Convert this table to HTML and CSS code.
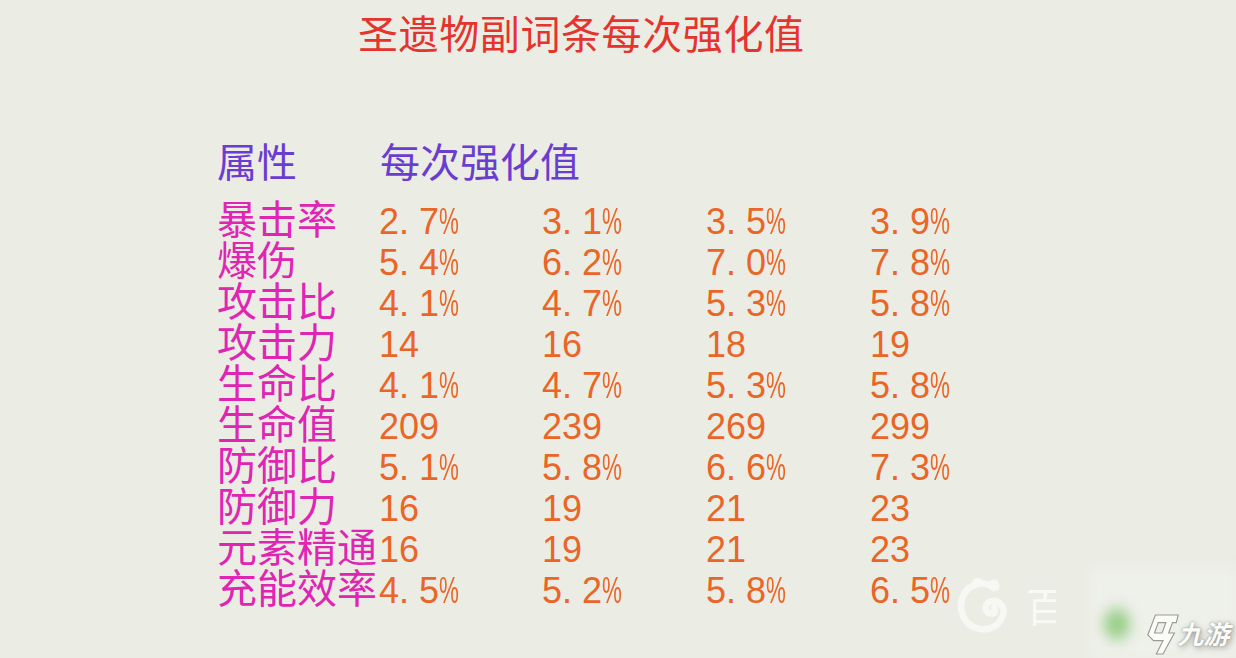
FILE: index.html
```html
<!DOCTYPE html>
<html lang="zh-CN">
<head>
<meta charset="utf-8">
<title>圣遗物副词条每次强化值</title>
<link rel="stylesheet" href="styles.css">
</head>
<body>
<div class="page">
  <h1 class="title">圣遗物副词条每次强化值</h1>
  <div class="table">
    <div class="row head"><span>属性</span><span class="span4">每次强化值</span></div>
    <div class="rows">
      <div class="row"><span class="lab">暴击率</span><span class="val">2. 7<i class="pct">%</i></span><span class="val">3. 1<i class="pct">%</i></span><span class="val">3. 5<i class="pct">%</i></span><span class="val">3. 9<i class="pct">%</i></span></div>
      <div class="row"><span class="lab">爆伤</span><span class="val">5. 4<i class="pct">%</i></span><span class="val">6. 2<i class="pct">%</i></span><span class="val">7. 0<i class="pct">%</i></span><span class="val">7. 8<i class="pct">%</i></span></div>
      <div class="row"><span class="lab">攻击比</span><span class="val">4. 1<i class="pct">%</i></span><span class="val">4. 7<i class="pct">%</i></span><span class="val">5. 3<i class="pct">%</i></span><span class="val">5. 8<i class="pct">%</i></span></div>
      <div class="row"><span class="lab">攻击力</span><span class="val">14</span><span class="val">16</span><span class="val">18</span><span class="val">19</span></div>
      <div class="row"><span class="lab">生命比</span><span class="val">4. 1<i class="pct">%</i></span><span class="val">4. 7<i class="pct">%</i></span><span class="val">5. 3<i class="pct">%</i></span><span class="val">5. 8<i class="pct">%</i></span></div>
      <div class="row"><span class="lab">生命值</span><span class="val">209</span><span class="val">239</span><span class="val">269</span><span class="val">299</span></div>
      <div class="row"><span class="lab">防御比</span><span class="val">5. 1<i class="pct">%</i></span><span class="val">5. 8<i class="pct">%</i></span><span class="val">6. 6<i class="pct">%</i></span><span class="val">7. 3<i class="pct">%</i></span></div>
      <div class="row"><span class="lab">防御力</span><span class="val">16</span><span class="val">19</span><span class="val">21</span><span class="val">23</span></div>
      <div class="row"><span class="lab">元素精通</span><span class="val">16</span><span class="val">19</span><span class="val">21</span><span class="val">23</span></div>
      <div class="row"><span class="lab">充能效率</span><span class="val">4. 5<i class="pct">%</i></span><span class="val">5. 2<i class="pct">%</i></span><span class="val">5. 8<i class="pct">%</i></span><span class="val">6. 5<i class="pct">%</i></span></div>
    </div>
  </div>

  <div class="wm-baidu">
    <svg class="wm-baidu-logo" width="60" height="60" viewBox="0 0 64 64">
      <path d="M44 14 C36 6 20 8 13 20 C6 32 10 50 24 56 C36 61 50 56 54 44 C58 34 50 26 42 28 C34 30 34 40 41 41 C45 42 47 38 45 35" fill="none" stroke="#f8f8f4" stroke-width="7" stroke-linecap="round" opacity="0.95"/>
      <path d="M24 12 C22 5 30 3 32 9" fill="none" stroke="#f8f8f4" stroke-width="5" stroke-linecap="round" opacity="0.95"/>
      <path d="M40 12 C42 5 50 6 48 14" fill="none" stroke="#f8f8f4" stroke-width="5" stroke-linecap="round" opacity="0.95"/>
    </svg>
    <span class="wm-baidu-text">百</span>
  </div>

  <div class="wm-jy">
    <div class="wm-jy-glow"></div>
    <div class="wm-jy-green"></div>
    <svg class="wm-jy-logo" width="38" height="44" viewBox="0 0 40 46">
      <path d="M12 3 L36 3 L34 11 L30 11 L26 22 L32 22 L20 44 L13 44 L20 30 L10 30 L4 24 Z M15 11 L11 22 L19 22 L23 11 Z" fill="#fbfbf8" fill-rule="evenodd" stroke="#9a9a96" stroke-width="1.2"/>
    </svg>
    <span class="wm-jy-text">九游</span>
  </div>
</div>
</body>
</html>
```

FILE: styles.css
```css
html, body {
  margin: 0;
  padding: 0;
}
body {
  background: #ebede4;
  width: 1236px;
  height: 658px;
  overflow: hidden;
}
.page {
  position: relative;
  width: 1236px;
  height: 658px;
  padding-top: 12px;
  box-sizing: border-box;
}
.title {
  margin: 0;
  padding-left: 358px;
  font-family: "Noto Sans CJK SC", sans-serif;
  font-weight: 400;
  font-size: 40px;
  line-height: 41px;
  letter-spacing: 0.6px;
  color: #e5332e;
}
.table {
  margin-top: 87px;
  padding-left: 217px;
}
.row {
  display: grid;
  grid-template-columns: 163px 163px 164px 164px auto;
  align-items: baseline;
  height: 41px;
  white-space: nowrap;
}
.head {
  font-family: "Noto Sans CJK SC", sans-serif;
  font-size: 40px;
  line-height: 41px;
  color: #6a3dd0;
}
.head .span4 {
  grid-column: 2 / 6;
}
.rows {
  margin-top: 16px;
}
.lab {
  font-family: "Noto Sans CJK SC", sans-serif;
  font-size: 40px;
  line-height: 41px;
  color: #e024b4;
}
.val {
  font-family: "Liberation Sans", Arial, sans-serif;
  font-size: 36px;
  line-height: 41px;
  color: #ea6528;
  margin-left: -1px;
}
.pct {
  font-style: normal;
  display: inline-block;
  width: 20px;
  transform: scaleX(0.62);
  transform-origin: 0 50%;
}

.wm-baidu {
  position: absolute;
  left: 952px;
  top: 574px;
  width: 104px;
  height: 62px;
  overflow: hidden;
  display: flex;
  align-items: center;
  gap: 14px;
}
.wm-baidu-logo {
  flex: none;
}
.wm-baidu-text {
  font-family: "Noto Sans CJK SC", sans-serif;
  font-size: 40px;
  line-height: 44px;
  color: #f9f9f5;
}
.wm-jy {
  position: absolute;
  left: 1090px;
  top: 568px;
  width: 146px;
  height: 90px;
}
.wm-jy-glow {
  position: absolute;
  left: 0;
  top: 0;
  width: 146px;
  height: 90px;
  background: #eef0ea;
  filter: blur(6px);
}
.wm-jy-green {
  position: absolute;
  left: 14px;
  top: 40px;
  width: 26px;
  height: 32px;
  border-radius: 50%;
  background: #8fca7e;
  filter: blur(7px);
  opacity: 0.9;
}
.wm-jy-logo {
  position: absolute;
  left: 54px;
  top: 44px;
}
.wm-jy-text {
  position: absolute;
  left: 90px;
  top: 50px;
  white-space: nowrap;
  font-family: "Noto Sans CJK SC", sans-serif;
  font-size: 26px;
  line-height: 30px;
  font-weight: 700;
  color: #fbfbf8;
  transform: skewX(-14deg);
  text-shadow: 0 0 2px #8a8a86, 2px 2px 6px #9a9a96;
}
```
